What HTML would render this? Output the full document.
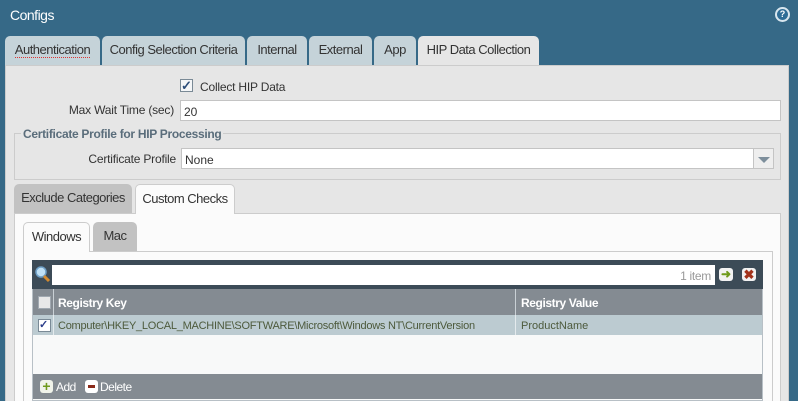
<!DOCTYPE html>
<html style="overflow:hidden;width:798px;height:401px"><head><style>
*{box-sizing:border-box;margin:0;padding:0}
body{width:798px;height:401px;background:#366987;font-family:"Liberation Sans",sans-serif;font-size:12px;position:relative;overflow:hidden;color:#333}
.a{position:absolute;white-space:nowrap}
.tab{position:absolute;top:36px;height:29px;background:#c5d3d9;border-radius:5px 5px 0 0;color:#333;font-size:13px;line-height:28px;text-align:center;letter-spacing:-0.5px;white-space:nowrap}
.cb{position:absolute;width:13px;height:13px;border:1px solid #8a9aa6;background:#f4f6f8}
</style></head><body>
<div class="a" style="left:10px;top:7px;color:#fff;font-size:14px;letter-spacing:-0.5px">Configs</div>
<div class="a" style="left:775px;top:7px;width:15px;height:15px;border-radius:50%;background:#fff;border:2px solid #d8e6ee"><div style="width:11px;height:11px;border-radius:50%;background:#2f6d96;color:#fff;font-size:9px;font-weight:bold;text-align:center;line-height:11px">?</div></div>
<div class="tab" style="left:5px;width:95px"><span style="border-bottom:1px dotted #d33">Authentication</span></div>
<div class="tab" style="left:102px;width:143px">Config Selection Criteria</div>
<div class="tab" style="left:247px;width:60px">Internal</div>
<div class="tab" style="left:309px;width:63px">External</div>
<div class="tab" style="left:374px;width:42px">App</div>
<div class="tab" style="left:418px;width:121px;background:#e6e6e6;height:30px">HIP Data Collection</div>
<div class="a" style="left:5px;top:65px;width:784px;height:340px;background:#e6e6e6;border:1px solid #ccc"></div>
<div class="cb" style="left:180px;top:79px;border-color:#7a8a96"><div style="color:#2b4d7a;font-size:13px;line-height:11px;font-weight:bold">✓</div></div>
<div class="a" style="left:200px;top:80px;font-size:12px;letter-spacing:-0.2px">Collect HIP Data</div>
<div class="a" style="left:40px;top:103px;width:134px;text-align:right;letter-spacing:-0.2px">Max Wait Time (sec)</div>
<div class="a" style="left:180px;top:100px;width:601px;height:21px;background:#fff;border:1px solid #c4c4c4;padding:4px 3px">20</div>
<div class="a" style="left:14px;top:133px;width:767px;height:47px;border:1px solid #ccc"></div>
<div class="a" style="left:21px;top:127px;padding:0 2px;background:#e6e6e6;font-weight:bold;color:#5a6d7b;font-size:12px;letter-spacing:-0.3px">Certificate Profile for HIP Processing</div>
<div class="a" style="left:40px;top:152px;width:136px;text-align:right;letter-spacing:-0.2px">Certificate Profile</div>
<div class="a" style="left:181px;top:148px;width:593px;height:21px;background:#fff;border:1px solid #c4c4c4;padding:4px 3px">None</div>
<div class="a" style="left:753px;top:149px;width:20px;height:19px;background:#eee;border-left:1px solid #c4c4c4"><div style="margin:8px 0 0 4px;width:0;height:0;border-left:6px solid transparent;border-right:6px solid transparent;border-top:6px solid #7d8e9b"></div></div>
<div class="a" style="left:14px;top:213px;width:767px;height:200px;background:#fbfbfb;border:1px solid #ccc"></div>
<div class="a" style="left:14px;top:184px;width:118px;height:29px;background:#c2c2c2;border-radius:5px 5px 0 0;font-size:13px;line-height:28px;text-align:center;letter-spacing:-0.5px">Exclude Categories</div>
<div class="a" style="left:135px;top:184px;width:100px;height:30px;background:#fbfbfb;border:1px solid #ccc;border-bottom:none;border-radius:5px 5px 0 0;font-size:13px;line-height:28px;text-align:center;letter-spacing:-0.5px">Custom Checks</div>
<div class="a" style="left:23px;top:251px;width:750px;height:160px;border:1px solid #ccc"></div>
<div class="a" style="left:23px;top:222px;width:67px;height:30px;background:#fbfbfb;border:1px solid #ccc;border-bottom:none;border-radius:5px 5px 0 0;font-size:13px;line-height:28px;text-align:center;letter-spacing:-0.5px">Windows</div>
<div class="a" style="left:93px;top:222px;width:44px;height:29px;background:#c2c2c2;border-radius:5px 5px 0 0;font-size:13px;line-height:28px;text-align:center;letter-spacing:-0.5px">Mac</div>
<div class="a" style="left:32px;top:260px;width:731px;height:141px;background:#f8f9f9;border:1px solid #b8c0c6"></div>
<div class="a" style="left:32px;top:260px;width:731px;height:29px;background:#3c4b57"></div>
<svg class="a" style="left:35px;top:266px" width="16" height="18"><circle cx="6" cy="6" r="5" fill="#bfe0f5" stroke="#6e9fc6" stroke-width="1.5"/><line x1="9" y1="10" x2="14" y2="15" stroke="#d38a2e" stroke-width="3"/></svg>
<div class="a" style="left:52px;top:265px;width:663px;height:20px;background:#fff;text-align:right;padding:4px 4px;color:#999;letter-spacing:-0.3px">1 item</div>
<div class="a" style="left:719px;top:268px;width:14px;height:13px;background:#f2f2f2;border-radius:3px;color:#6f9a1c;font-size:12px;line-height:13px;text-align:center;font-weight:bold">➜</div>
<div class="a" style="left:742px;top:268px;width:14px;height:13px;background:#f2f2f2;border-radius:3px;color:#a3321b;font-size:13px;line-height:13px;text-align:center;font-weight:bold">✖</div>
<div class="a" style="left:33px;top:289px;width:729px;height:26px;background:#848b92"></div>
<div class="a" style="left:53px;top:289px;width:1px;height:45px;background:#c9d0d5"></div>
<div class="a" style="left:515px;top:289px;width:1px;height:45px;background:#c9d0d5"></div>
<div class="cb" style="left:38px;top:296px;background:#e8e8e8;border-color:#a0a8b0"></div>
<div class="a" style="left:58px;top:296px;color:#fff;font-weight:bold;font-size:12px;letter-spacing:-0.4px">Registry Key</div>
<div class="a" style="left:521px;top:296px;color:#fff;font-weight:bold;font-size:12px;letter-spacing:-0.4px">Registry Value</div>
<div class="a" style="left:33px;top:315px;width:729px;height:20px;background:#bccbd1"></div>
<div class="a" style="left:53px;top:315px;width:1px;height:20px;background:#e4eaed"></div>
<div class="a" style="left:515px;top:315px;width:1px;height:20px;background:#e4eaed"></div>
<div class="cb" style="left:38px;top:319px;background:#fff;border-color:#7a8a96"><div style="color:#2b3d8a;font-size:11px;line-height:11px;font-weight:bold">✓</div></div>
<div class="a" style="left:58px;top:320px;color:#4d5a3c;font-size:11px;letter-spacing:-0.25px">Computer\HKEY_LOCAL_MACHINE\SOFTWARE\Microsoft\Windows NT\CurrentVersion</div>
<div class="a" style="left:521px;top:320px;color:#4d5a3c;font-size:11px">ProductName</div>
<div class="a" style="left:33px;top:374px;width:729px;height:25px;background:#848b92"></div>
<div class="a" style="left:40px;top:380px;width:13px;height:13px;background:#f0f3ea;border-radius:3px;color:#6f9a1c;font-weight:bold;font-size:14px;line-height:12px;text-align:center">+</div>
<div class="a" style="left:56px;top:380px;color:#fff;font-size:12px;letter-spacing:-0.5px">Add</div>
<div class="a" style="left:85px;top:380px;width:13px;height:13px;background:#fff;border-radius:3px"><div style="margin:5px 3px;width:7px;height:3px;background:#8a2a1a"></div></div>
<div class="a" style="left:100px;top:380px;color:#fff;font-size:12px;letter-spacing:-0.5px">Delete</div>
</body></html>
